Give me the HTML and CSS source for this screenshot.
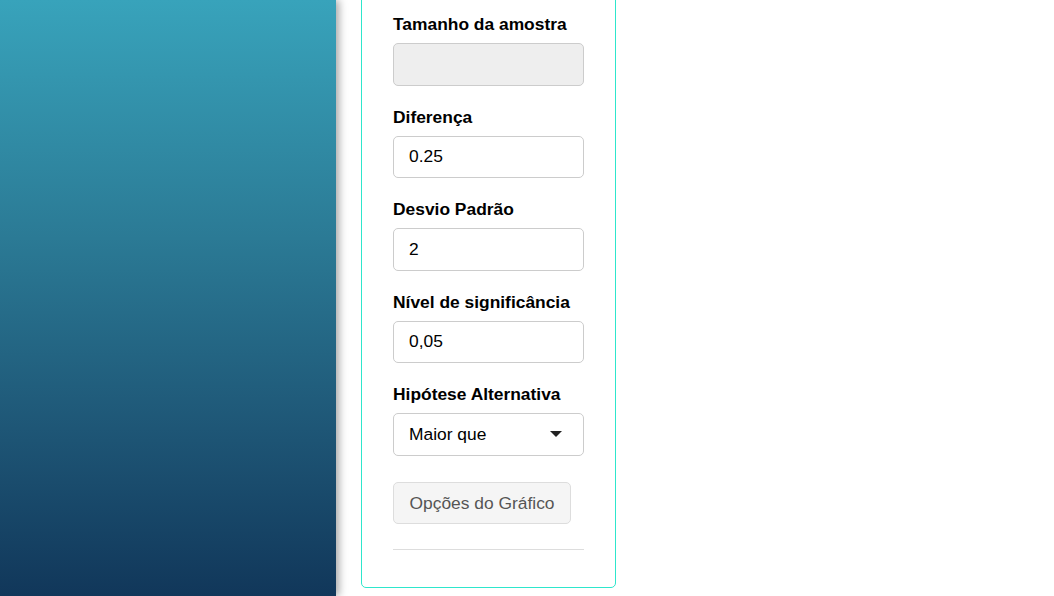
FILE: index.html
```html
<!DOCTYPE html>
<html lang="pt">
<head>
<meta charset="utf-8">
<link rel="stylesheet" href="styles.css">
</head>
<body>
<div class="layout">
  <aside class="sidebar"></aside>
  <main class="main">
    <section class="card">
      <div class="group">
        <label class="label">Tamanho da amostra</label>
        <div class="input disabled"></div>
      </div>
      <div class="group">
        <label class="label">Diferença</label>
        <div class="input">0.25</div>
      </div>
      <div class="group">
        <label class="label">Desvio Padrão</label>
        <div class="input">2</div>
      </div>
      <div class="group">
        <label class="label">Nível de significância</label>
        <div class="input">0,05</div>
      </div>
      <div class="group">
        <label class="label">Hipótese Alternativa</label>
        <div class="input select"><span>Maior que</span><span class="caret"></span></div>
      </div>
      <button class="btn">Opções do Gráfico</button>
      <hr class="rule">
    </section>
  </main>
</div>
</body>
</html>
```
FILE: styles.css
```css
html, body {
  margin: 0;
  padding: 0;
  background: #ffffff;
  font-family: "Liberation Sans", Arial, sans-serif;
  color: #000;
  overflow: hidden;
}
.layout {
  display: flex;
  height: 596px;
}
.sidebar {
  width: 336px;
  flex: none;
  background: linear-gradient(to bottom, #38a3bb 0%, #2b7a95 40%, #1e5676 72%, #11375a 100%);
  box-shadow: 3px 0 8px rgba(0,0,0,0.35);
  position: relative;
  z-index: 1;
}
.main {
  padding-left: 25px;
}
.card {
  width: 255px;
  margin-top: -20px;
  height: 608px;
  box-sizing: border-box;
  padding: 33px 31px 0 31px;
  border: 1px solid #2ee6cc;
  border-radius: 5px;
}
.group {
  margin-bottom: 21px;
}
.label {
  display: block;
  font-weight: bold;
  font-size: 17.4px;
  line-height: 20px;
  margin-bottom: 9px;
  white-space: nowrap;
}
.input {
  box-sizing: border-box;
  height: 42.5px;
  border: 1px solid #cccccc;
  border-radius: 5px;
  padding: 0 15px;
  font-size: 17.4px;
  display: flex;
  align-items: center;
  background: #fff;
}
.input.disabled {
  background: #eeeeee;
}
.select {
  justify-content: space-between;
}
.caret {
  width: 0;
  height: 0;
  border-left: 6px solid transparent;
  border-right: 6px solid transparent;
  border-top: 6px solid #222;
  margin-right: 6px;
}
.btn {
  display: block;
  margin-top: 26.5px;
  height: 42px;
  box-sizing: border-box;
  padding: 0 15.5px;
  font-family: inherit;
  font-size: 17.4px;
  color: #555;
  background: #f5f5f5;
  border: 1px solid #dddddd;
  border-radius: 5px;
  white-space: nowrap;
}
.rule {
  margin: 25px 0 0 0;
  border: 0;
  border-top: 1px solid #dddddd;
}
```
